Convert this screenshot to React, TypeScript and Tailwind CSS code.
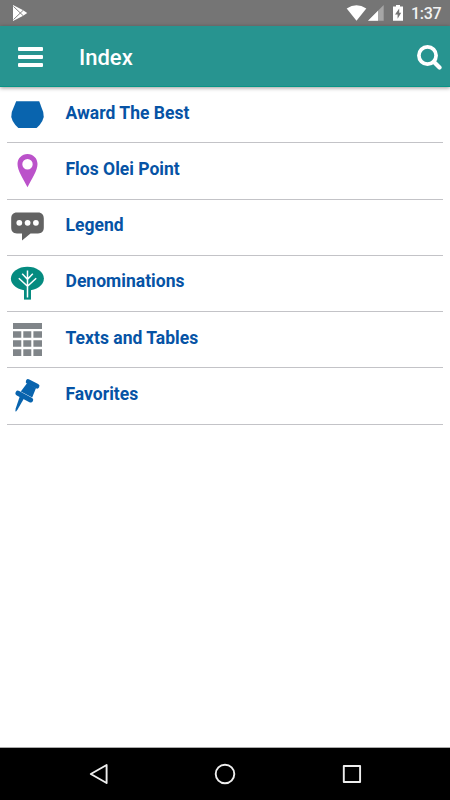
import React from "react";

const icons: React.ReactNode[] = [
  <path key="a" fill="#0964ae" d="M6.2 4.3H29.2L33.2 15Q34.6 19.5 32.3 24Q30.2 28 26.6 30.9H8.4Q4.8 28 2.7 24Q.4 19.5 1.8 15Z" />,
  <path key="b" fill="#bb52ca" fillRule="evenodd" d="M17.5 1C11.8 1 7.5 5.4 7.5 11C7.5 17.5 13 25.5 17.5 34.2C22 25.5 27.5 17.5 27.5 11C27.5 5.4 23.2 1 17.5 1ZM17.5 6a5.2 5.2 0 1 1 0 10.4a5.2 5.2 0 1 1 0-10.4Z" />,
  <g key="c">
    <path fill="#636363" d="M7 3.6H28C32 3.6 33.8 6 33.8 9.5V18.5C33.8 22 32 24.4 28 24.4H20.5L12 31.4V24.4H7C3 24.4 1.2 22 1.2 18.5V9.5C1.2 6 3 3.6 7 3.6Z" />
    <g fill="#fff"><circle cx="9.3" cy="13.8" r="2.9" /><circle cx="17.6" cy="13.8" r="2.9" /><circle cx="25.9" cy="13.8" r="2.9" /></g>
  </g>,
  <g key="d">
    <ellipse cx="17.4" cy="12.6" rx="16.5" ry="11.9" fill="#058b80" />
    <path fill="#058b80" d="M14 22H21V33.6H14Z" />
    <path fill="none" stroke="#fff" strokeWidth="1.5" d="M17.5 4.5V31.5M12.2 7.8L17.5 13.3L22.8 7.8M8.8 12.2L17.5 20.3L26.2 12.2" />
  </g>,
  <path key="e" fill="#808589" d="M3 1H32V7H3ZM3 9.3h8.3v6.5H3ZM13.3 9.3h8v6.5h-8ZM23.4 9.3H32v6.5h-8.6ZM3 18.3h8.3v6.5H3ZM13.3 18.3h8v6.5h-8ZM23.4 18.3H32v6.5h-8.6ZM3 27.3h8.3v6.7H3ZM13.3 27.3h8v6.7h-8ZM23.4 27.3H32v6.7h-8.6Z" />,
  <g key="f" fill="#0964ae">
    <path d="M18.2 3.6L27 8.2" stroke="#0964ae" strokeWidth="4.8" strokeLinecap="round" />
    <path d="M17.2 5L26 10L22.2 19.5L10.8 13.6Z" />
    <path d="M8 15.2L20.6 22" stroke="#0964ae" strokeWidth="5" strokeLinecap="round" />
    <path d="M10 17.8L14.2 20L7.6 31.6L5.9 33.8Q5.1 33.5 5.7 30.6Z" />
  </g>,
];
const labels = ["Award The Best", "Flos Olei Point", "Legend", "Denominations", "Texts and Tables", "Favorites"];

export default function App() {
  return (
    <div className="flex h-[800px] w-[450px] flex-col overflow-hidden bg-white font-['Roboto',sans-serif]">
      <div className="flex h-[26px] shrink-0 items-center bg-[#757575] text-white">
        <svg className="ml-3 h-[26px] w-4" viewBox="0 0 16 26">
          <path fill="#fff" d="M1 5L10.8 10L15.2 13L10.8 16L1 21Z" />
          <path fill="none" stroke="#757575" strokeWidth=".9" d="M1.5 6.5L11.5 16M1.5 19.5L11.5 10" />
        </svg>
        <svg className="ml-auto h-[26px] w-[60px]" viewBox="345 0 60 26">
          <path fill="#fff" d="M346.7 8.5Q356.5 2 366.3 8.5L356.5 20.8Z" />
          <path fill="#a6a6a6" d="M368 20.7L383.7 5V20.7Z" />
          <path fill="#fff" d="M368 20.7L378 10.7V20.7Z" />
          <path fill="#fff" d="M393 6.5h3V5h4v1.5h3V20.8H393Z" />
          <path fill="#757575" d="M399.2 8.5L395 14.5H397.6V18.7L401.2 12.7H399.2Z" />
        </svg>
        <span className="ml-[6px] mr-[9px] w-[30px] whitespace-nowrap pt-px text-[16px] font-medium leading-[26px] tracking-[-0.3px] text-[#f2f2f2]">1:37</span>
      </div>
      <header className="z-10 flex h-[61px] shrink-0 items-center border-b border-[#079486] bg-[#279490] text-white shadow-[0_1px_4px_rgba(0,0,0,0.4)]">
        <div className="ml-[18px] mt-0.5 flex w-[25px] flex-col gap-1">
          <div className="h-1 rounded-[1px] bg-white" />
          <div className="h-1 rounded-[1px] bg-white" />
          <div className="h-1 rounded-[1px] bg-white" />
        </div>
        <h1 className="ml-[36px] mt-1 text-[22px] font-medium leading-7">Index</h1>
        <svg className="ml-auto mr-[7px] mt-0.5 h-[26px] w-[27px]" viewBox="416 44 27 26" fill="none" stroke="#fff">
          <circle cx="427.5" cy="55.5" r="8.6" strokeWidth="3.7" />
          <path d="M434 62L439.5 67.5" strokeWidth="4.2" strokeLinecap="round" />
        </svg>
      </header>
      <main className="flex-1 px-[7px]">
        {labels.map((label, i) => (
          <div key={label} className="flex h-[56.25px] items-start border-b border-[#c3c3c7]">
            <svg className="ml-[3px] mt-[9.75px] h-9 w-9 shrink-0" viewBox="0 0 36 36">{icons[i]}</svg>
            <span className="ml-[19.5px] mt-[13.5px] text-[17.5px] font-bold leading-6 tracking-[0.02px] text-[#0653a5]">{label}</span>
          </div>
        ))}
      </main>
      <nav className="h-[53px] shrink-0 border-t border-[#aaa] bg-black">
        <svg className="h-[52px] w-[450px]" viewBox="0 748 450 52" fill="none" stroke="#eee" strokeWidth="1.9" strokeLinejoin="round">
          <path d="M106.6 765L90.8 774L106.6 783Z" />
          <circle cx="225" cy="774" r="9.3" />
          <rect x="343.8" y="766" width="16.3" height="16" />
        </svg>
      </nav>
    </div>
  );
}
